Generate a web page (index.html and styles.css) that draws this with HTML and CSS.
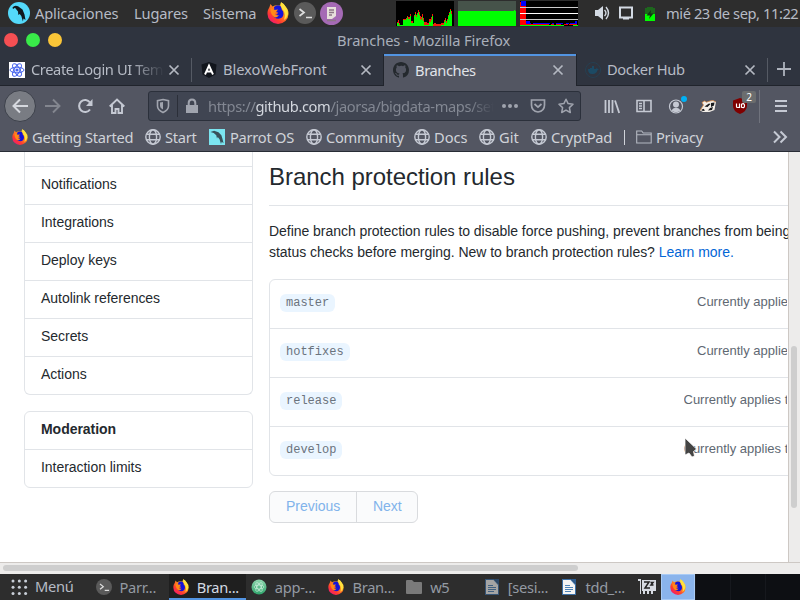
FILE: index.html
```html
<!DOCTYPE html>
<html lang="es">
<head>
<meta charset="utf-8">
<title>Branches</title>
<link rel="stylesheet" href="styles.css">
</head>
<body>
<svg class="defs" aria-hidden="true">
  <defs>
    <linearGradient id="fx-body" x1="1" y1="0" x2="0.2" y2="1"><stop offset="0" stop-color="#fff14a"/><stop offset=".4" stop-color="#ff9a1a"/><stop offset=".75" stop-color="#ff3b30"/><stop offset="1" stop-color="#f0147a"/></linearGradient>
    <linearGradient id="atom-bg" x1="0" y1="0" x2="0" y2="1"><stop offset="0" stop-color="#8fd6ae"/><stop offset="1" stop-color="#2fa56c"/></linearGradient>
    <symbol id="firefox" viewBox="0 0 22 22">
      <path fill="url(#fx-body)" d="M1 8 2.500 5 3.500 2l2 2.500Q9 2.500 13 3.500L14 .3q3 1.500 4.500 4.200Q21.500 7 21.500 12A10.500 10 0 0 1 .5 12Q.3 10 1 8z"/>
      <path fill="#1414d8" d="M7 5q3-2.500 6-1.200 2 1 1.700 3.700 2 1.500 1.800 4.500-.5 4.500-5 4.700Q7 16.500 6 13l4-.5 1-2-3.500-1z"/>
      <path fill="#ff8a16" d="M3.500 5.500 7 8l4-.5-1.500 2L8 12q1.500 2 4 1-2 3.500-5 2-4-3-3.500-9.500z"/>
      <path fill="#ffe23e" d="M14 .3q3 1.500 4.500 4.200 2.500 3 2.500 7.500-1 4-4 6 2-6-.5-9.500Q13 5 14 .3z"/>
    </symbol>
    <symbol id="globe" viewBox="0 0 16 16"><g fill="none" stroke="#c5c9d3" stroke-width="1.4"><circle cx="8" cy="8" r="7.200"/><ellipse cx="8" cy="8" rx="3.600" ry="7.200"/><path d="M1.500 5.300h13M1.500 10.700h13"/></g></symbol>
    <symbol id="close" viewBox="0 0 12 12"><path d="M1.500 1.500l9 9m0-9l-9 9" fill="none" stroke="currentColor" stroke-width="1.700"/></symbol>
    <symbol id="terminal" viewBox="0 0 22 22"><circle cx="11" cy="11" r="11" fill="#5a5a5a"/><path d="M5.500 7l4.500 3.500-4.500 3.500M12 15.500h6" fill="none" stroke="#dedede" stroke-width="1.700"/></symbol>
    <symbol id="doc" viewBox="0 0 14 16"><path d="M0 0h9l5 5v11H0z" fill="#3c6fa5"/><path d="M1 1h7.500l4.500 5v9H1z" fill="#f4f4f4"/><path d="M9 0h5v5z" fill="#2c5c91"/><path d="M3 6.500h5M3 8.500h8M3 10.500h8M3 12.500h6" stroke="#4d83b8"/></symbol>
    <symbol id="folder" viewBox="0 0 16 14"><path d="M0 1q0-1 1-1h5l2 2h7q1 0 1 1v10q0 1-1 1H1q-1 0-1-1z" fill="#7a7a7a"/></symbol>
    <symbol id="parrot" viewBox="0 0 22 22"><path fill="#11181d" d="M4.500 5.500Q6.500 3 10 4.300l4.500 3.200 2 5 1 5.500-2-1.500-.6 3-1.600-5.500-1.600-2-1.400 1-.3-3.500L7 5.800 5 7z"/></symbol>
  </defs>
</svg>

<header class="panel">
  <svg class="panel-parrot" viewBox="0 0 22 22"><circle cx="11" cy="11" r="11" fill="#54d9fa"/><use href="#parrot"/></svg>
  <span class="menu menu-apps">Aplicaciones</span>
  <span class="menu menu-places">Lugares</span>
  <span class="menu menu-system">Sistema</span>
  <svg class="launcher"><use href="#firefox"/></svg>
  <svg class="launcher launcher-terminal"><use href="#terminal"/></svg>
  <svg class="launcher-notes" viewBox="0 0 23 23"><circle cx="11.500" cy="11.500" r="11.500" fill="#a56ab5"/><path d="M7 5h9v9l-4 3H7z" fill="#e7e0dc"/><path d="M9 8h5M9 10.500h5M9 13h3M7 18.500h9" stroke="#8d7787" stroke-width="1.300"/></svg>
  <svg class="graph graph-cpu" viewBox="0 0 58 25" shape-rendering="crispEdges"><path fill="#000" d="M0 0h58v25H0z"/><path fill="#f21b0c" d="M1 25v-4h1v-2h1v3h1v2h3v-6h3v-1h1v-2h1v1h2v-3h1v7h2v2h1v-8h1v-3h1v3h1v-2h1v-3h1v2h1v4h1v1h1v-3h1v4h1v4h3v1h2v-4h2v-2h1v-3h1v10h1v-1h2v1h5v-1h3v-3h1v-2h1v3h1v-2h1v-4h1v-3h1V8h1v2h1v15z"/><path fill="#0f0" d="M1 25v-3h2v2h4v-5h3v-1h1v-2h1v2h2v-3h1v7h3v-7h1v-2h1v3h1v-3h1v-2h1v3h1v4h1v1h1v-3h1v4h1v4h5v-3h2v-2h1v-4h1v10h8v-1h3v-3h1v-2h1v3h1v-3h1v-4h1v-3h1v-3h1v4h1v14z"/></svg>
  <svg class="graph" viewBox="0 0 58 25" shape-rendering="crispEdges"><path fill="#46534a" d="M0 0h58v25H0z"/><path fill="#0f0" d="M0 10h56V9h1v1h1v15H0z"/></svg>
  <svg class="graph" viewBox="0 0 58 25" shape-rendering="crispEdges"><path fill="#000" d="M0 0h58v25H0z"/><path fill="red" d="M0 1h6v24H0z"/><path fill="#00f" d="M1 0h5v5H1zM6 20h4v2H6z"/><path stroke="#ccc" d="M0 6.500h58M0 18.500h58"/><path stroke="#fff" d="M0 12.500h58"/><path stroke="#00f" d="M6 22.500h5m2 0h17m2 0h2m2 0h7m3 0h3m1 0h7"/><path stroke="red" d="M6 23.500h23m2 0h3m2 0h5m3 0h4m1 0h8"/><path stroke="#0f0" d="M0 24.500h44m9 0h5"/><path fill="#00f" d="M55 20h2v2h-2z"/></svg>
  <svg class="tray tray-sound" viewBox="0 0 16 16"><path d="M1 5h3l5-4v14l-5-4H1z" fill="#d3dae3"/><path d="M10.500 5q3 3 0 6M12 2q5 6 0 12" fill="none" stroke="#d3dae3" stroke-width="1.400"/></svg>
  <svg class="tray tray-screen" viewBox="0 0 16 16"><path d="M2 2.500h12v10H2zM5 13.500h6" fill="none" stroke="#d3dae3" stroke-width="2"/></svg>
  <svg class="tray-battery" viewBox="0 0 10 14"><path d="M2 0h6v1h2v13H0V1h2z" fill="#1d661d"/><path d="M0 7h10v7H0z" fill="#0f0"/><path d="M6 3L1.500 8.500H5L4 12l4.500-5.500H5.500z" fill="#153315"/></svg>
  <span class="clock">mié 23 de sep, 11:22</span>
</header>

<div class="titlebar">
  <i class="dot dot-red"></i><i class="dot dot-green"></i><i class="dot dot-yellow"></i>
  <span class="window-title">Branches - Mozilla Firefox</span>
</div>

<nav class="tabs">
  <div class="tab">
    <svg class="favicon" viewBox="0 0 16 16"><path fill="#fff" d="M0 0h16v16H0z"/><g fill="none" stroke="#4663ed"><ellipse cx="8" cy="8" rx="7" ry="2.800"/><ellipse cx="8" cy="8" rx="7" ry="2.800" transform="rotate(60 8 8)"/><ellipse cx="8" cy="8" rx="7" ry="2.800" transform="rotate(120 8 8)"/></g><circle cx="8" cy="8" r="1.600" fill="#4663ed"/></svg>
    <span class="tab-label tab-fade">Create Login UI Tem</span><svg class="tab-close"><use href="#close"/></svg>
  </div>
  <div class="tab tab-divided">
    <svg class="favicon" viewBox="0 0 16 16"><path fill="#11151c" d="M8 0l7.500 2.500-1 10L8 16l-6.500-3.500-1-10z"/><path d="M4 12.500L8 3.500l4 9M5.500 9.500h5" fill="none" stroke="#fff" stroke-width="1.900"/></svg>
    <span class="tab-label tab-blexo">BlexoWebFront</span><svg class="tab-close"><use href="#close"/></svg>
  </div>
  <div class="tab tab-active">
    <svg class="favicon" viewBox="0 0 16 16"><path fill="#24292e" d="M8 0C3.580 0 0 3.580 0 8c0 3.540 2.290 6.530 5.470 7.590.4.070.55-.17.55-.38 0-.19-.01-.82-.01-1.490-2.010.37-2.530-.49-2.690-.94-.09-.23-.48-.94-.82-1.130-.28-.15-.68-.52-.01-.53.63-.01 1.080.58 1.230.82.720 1.210 1.870.87 2.330.66.070-.52.280-.87.510-1.070-1.780-.2-3.640-.89-3.640-3.950 0-.87.310-1.590.82-2.150-.08-.2-.36-1.020.08-2.120 0 0 .67-.21 2.200.82A7.600 7.600 0 0 1 8 3.860c.68 0 1.360.09 2 .27 1.530-1.040 2.200-.82 2.200-.82.440 1.100.160 1.920.080 2.120.510.560.820 1.270.820 2.150 0 3.070-1.870 3.750-3.650 3.950.290.250.540.730.540 1.480 0 1.070-.01 1.930-.01 2.200 0 .210.150.460.550.380A8.010 8.010 0 0 0 16 8c0-4.420-3.580-8-8-8z"/></svg>
    <span class="tab-label">Branches</span><svg class="tab-close"><use href="#close"/></svg>
  </div>
  <div class="tab">
    <svg class="favicon" viewBox="0 0 16 16"><circle cx="8" cy="8" r="7.500" fill="none" stroke="#263f51"/><path d="M3 7h2V6h2V4h2v3h2l1-1.500.5 1.500 1.500.3-1.500 1Q11 12.500 7 12q-4 0-4-5z" fill="#1c4a64"/></svg>
    <span class="tab-label">Docker Hub</span><svg class="tab-close"><use href="#close"/></svg>
  </div>
  <div class="new-tab"><svg viewBox="0 0 14 14"><path d="M7 0v14M0 7h14" stroke="#aeb3bd" stroke-width="1.800"/></svg></div>
</nav>

<div class="toolbar">
  <div class="back"><svg class="icon" viewBox="0 0 16 16"><path d="M16 8H1.500M8 1.500L1.500 8 8 14.500" fill="none" stroke="#d5d8de" stroke-width="2"/></svg></div>
  <div class="tool tool-dim"><svg class="icon" viewBox="0 0 16 16"><path d="M0 8h14.500M8 1.500L14.500 8 8 14.500" fill="none" stroke="currentColor" stroke-width="1.900"/></svg></div>
  <div class="tool"><svg class="icon" viewBox="0 0 16 16"><path d="M13 11.500A6 6 0 1 1 13 4.500" fill="none" stroke="currentColor" stroke-width="2.100"/><path d="M15.500 1v7H9z" fill="currentColor"/></svg></div>
  <div class="tool"><svg class="icon" viewBox="0 0 16 16"><path d="M.7 8.500L8 1.500l7.300 7M3 7v8h3.500v-4h3v4H13V7" fill="none" stroke="currentColor" stroke-width="1.900"/></svg></div>
  <div class="urlbar">
    <svg class="icon" viewBox="0 0 16 16"><path d="M8 1.500l5.500 1.200V8q0 4-5.500 6.500Q2.500 12 2.500 8V2.700z" fill="none" stroke="currentColor" stroke-width="1.600"/><path d="M8 4v7.500Q5 10 5 8V4.600z" fill="currentColor"/></svg>
    <i class="url-divider"></i>
    <svg class="icon lock" viewBox="0 0 16 16"><path d="M2 7h12v8H2z" fill="currentColor"/><path d="M4.700 8V5q0-3.500 3.300-3.500T11.300 5v3" fill="none" stroke="currentColor" stroke-width="2"/></svg>
    <span class="url">https://<b>github.com</b>/jaorsa/bigdata-maps/set</span>
    <svg class="icon" viewBox="0 0 16 16"><g fill="currentColor"><circle cx="2" cy="8" r="2"/><circle cx="8" cy="8" r="2"/><circle cx="14" cy="8" r="2"/></g></svg>
    <svg class="icon" viewBox="0 0 16 16"><path d="M1.500 2h13v5q0 6-6.500 7-6.500-1-6.500-7zM4.500 6L8 9.200 11.500 6" fill="none" stroke="currentColor" stroke-width="1.700"/></svg>
    <svg class="icon" viewBox="0 0 16 16"><path d="M8 1.200l2.100 4.400 4.900.6-3.600 3.400.9 4.900L8 12.100l-4.300 2.400.9-4.900L1 6.200l4.900-.6z" fill="none" stroke="currentColor" stroke-width="1.500" stroke-linejoin="round"/></svg>
  </div>
  <div class="tool"><svg class="icon" viewBox="0 0 16 16"><path d="M1.500 2v13M5 2v13M8.500 2v13M11 2.500L15.200 15" stroke="currentColor" stroke-width="1.800"/></svg></div>
  <div class="tool"><svg class="icon" viewBox="0 0 16 16"><path d="M1 2.500h14v11H1zM8 2.500v11M3 5.500h3M3 8h3M3 10.500h3" fill="none" stroke="currentColor" stroke-width="1.600"/></svg></div>
  <div class="tool account"><svg class="icon" viewBox="0 0 16 16"><circle cx="8" cy="8.500" r="6.500" fill="none" stroke="currentColor" stroke-width="1.200"/><circle cx="8" cy="6.500" r="3" fill="currentColor"/><path d="M3.500 12.500Q5 9.500 8 9.800q3-.3 4.500 2.700Q8 16 3.500 12.500z" fill="currentColor"/></svg><i class="notice"></i></div>
  <div class="tool"><svg class="icon" viewBox="0 0 16 16"><path d="M0 12.500L3.500 7 2 4.500 4.500 3l2 1.200L10 3l3-.5L16 4l-.8 4-.7 4-5 2H3z" fill="#f3eee8"/><path d="M4.500 8.500L9 5.500l1.500.5-3 3zM11 5l3.500-.5-.5 3-3 1.500zM1 12l2.500-1.200L5 12.500l-2 .5zM8 12.500l2-2.500 3-1-1 3z" fill="#17191c"/><path d="M0 12.500L3.500 7 2 4.500 4.500 3l2 1.200L10 3l3-.5L16 4" fill="none" stroke="#d68a49" stroke-width=".8"/></svg></div>
  <div class="tool ublock"><svg class="icon" viewBox="0 0 16 16"><path d="M8 0l7 2.500V8q0 5-7 8-7-3-7-8V2.500z" fill="#800000"/><path d="M4.500 5.500v3q0 1 1 1h1q1 0 1-1v-3M7.500 5.500v4.500M9.500 6.200q3-1.500 3 1.600 0 2.800-3 1.500z" fill="none" stroke="#fff" stroke-width="1.200"/></svg><span class="count">2</span></div>
  <i class="toolbar-divider"></i>
  <div class="tool"><svg class="icon" viewBox="0 0 16 16"><path d="M2 3h12M2 8h12M2 13h12" stroke="currentColor" stroke-width="2"/></svg></div>
</div>

<div class="bookmarks">
  <span class="bm bm-started"><svg class="icon"><use href="#firefox"/></svg>Getting Started</span>
  <span class="bm bm-start"><svg class="icon"><use href="#globe"/></svg>Start</span>
  <span class="bm bm-parrot"><svg class="icon" viewBox="0 0 22 22"><path fill="#7be4ef" d="M0 0h22v22H0z"/><path fill="#38515a" d="M2 4l5-1.500 6 2 4 4 1.500 5 1.500 6-2.500-2-1 3-2-6.500-2.500-3-1 2-1-4.500-3.500-3z"/></svg>Parrot OS</span>
  <span class="bm bm-community"><svg class="icon"><use href="#globe"/></svg>Community</span>
  <span class="bm bm-docs"><svg class="icon"><use href="#globe"/></svg>Docs</span>
  <span class="bm bm-git"><svg class="icon"><use href="#globe"/></svg>Git</span>
  <span class="bm bm-crypt"><svg class="icon"><use href="#globe"/></svg>CryptPad</span>
  <i class="bm-divider"></i>
  <span class="bm bm-privacy"><svg class="icon" viewBox="0 0 16 16"><path d="M.7 14V2h5l1.500 2h8v10zM.7 5.800h14.600" fill="none" stroke="#b4b8c1" stroke-width="1.100"/></svg>Privacy</span>
  <svg class="icon more" viewBox="0 0 16 16"><path d="M2 2.500L7.500 8 2 13.500M8.500 2.500L14 8l-5.500 5.500" fill="none" stroke="#c5c9d3" stroke-width="2"/></svg>
</div>

<div class="viewport">
  <div class="page">
    <aside class="side">
      <ul class="side-menu side-menu-cut">
        <li class="side-cut"></li>
        <li>Notifications</li><li>Integrations</li><li>Deploy keys</li><li>Autolink references</li><li>Secrets</li><li>Actions</li>
      </ul>
      <ul class="side-menu">
        <li class="side-heading">Moderation</li><li>Interaction limits</li>
      </ul>
    </aside>
    <main class="main">
      <h2>Branch protection rules</h2>
      <p>Define branch protection rules to disable force pushing, prevent branches from being<br>status checks before merging. New to branch protection rules? <a>Learn more.</a></p>
      <div class="rules">
        <div class="rule"><code>master</code><span class="applies">Currently applies</span></div>
        <div class="rule"><code>hotfixes</code><span class="applies">Currently applies</span></div>
        <div class="rule"><code>release</code><span class="applies applies-wide">Currently applies t</span></div>
        <div class="rule"><code>develop</code><span class="applies applies-wide">Currently applies t</span></div>
      </div>
      <div class="pager"><span class="prev">Previous</span><span class="next">Next</span></div>
    </main>
  </div>
  <div class="vscroll"><i class="vthumb"></i></div>
  <svg class="pointer" viewBox="0 0 14 22"><path d="M1 1v17l4-2 3 4 2.500-1-1-4.500L12.500 12z" fill="#444" stroke="#fff" stroke-opacity=".75"/></svg>
</div>
<div class="hscroll"><i class="hthumb"></i></div>

<footer class="taskbar">
  <svg class="grid-icon" viewBox="0 0 17 17"><g fill="#c9cfd8"><circle cx="2" cy="2" r="1.500"/><circle cx="8.300" cy="2" r="1.500"/><circle cx="14.600" cy="2" r="1.500"/><circle cx="2" cy="8.300" r="1.500"/><circle cx="8.300" cy="8.300" r="1.500"/><circle cx="14.600" cy="8.300" r="1.500"/><circle cx="2" cy="14.600" r="1.500"/><circle cx="8.300" cy="14.600" r="1.500"/><circle cx="14.600" cy="14.600" r="1.500"/></g></svg>
  <span class="start-label">Menú</span>
  <div class="task"><svg class="icon"><use href="#terminal"/></svg>Parr...</div>
  <div class="task task-active"><svg class="icon"><use href="#firefox"/></svg>Bran...</div>
  <div class="task"><svg class="icon" viewBox="0 0 16 16"><circle cx="8" cy="8" r="7.500" fill="url(#atom-bg)"/><g fill="none" stroke="#d7f2e2" stroke-width=".6"><ellipse cx="8" cy="8" rx="5" ry="2"/><ellipse cx="8" cy="8" rx="5" ry="2" transform="rotate(60 8 8)"/><ellipse cx="8" cy="8" rx="5" ry="2" transform="rotate(120 8 8)"/></g></svg>app-...</div>
  <div class="task"><svg class="icon"><use href="#firefox"/></svg>Bran...</div>
  <div class="task"><svg class="icon"><use href="#folder"/></svg>w5</div>
  <div class="task task-dim"><svg class="icon"><use href="#doc"/></svg>[sesi...</div>
  <div class="task"><svg class="icon"><use href="#doc"/></svg>tdd_...</div>
  <svg class="chip" viewBox="0 0 18 16"><path d="M0 0h3v15H2V2H0zM4 1h14v11H4zM5 12h2v3H5zM9 12h2v3H9zM13 12h2v3h-2z" fill="#d7dbe2"/><path d="M6 3h5l-4 6h5M12.500 3.500H15L13 6h2.500" fill="none" stroke="#222" stroke-width="1.500"/></svg>
  <div class="space space-on"><svg class="icon"><use href="#firefox"/></svg></div>
  <div class="space"></div><div class="space"></div><div class="space"></div>
</footer>
</body>
</html>
```
FILE: styles.css
```css
* { box-sizing: border-box; }
body {
  margin: 0; width: 800px; height: 600px; overflow: hidden;
  display: flex; flex-direction: column; background: #2f343f;
  font: 14.670px/20px "Noto Sans", sans-serif; color: #b6bbc5; white-space: nowrap;
}
svg, i { display: block; flex: none; }
.defs { position: absolute; width: 0; height: 0; }
.icon { width: 16px; height: 16px; }

.panel { flex: none; height: 27px; background: #2d2d2d; display: flex; align-items: center; padding-left: 8px; }
.panel-parrot { width: 22px; height: 22px; margin: -2px 5px 0 0; }
.menu, .clock { flex: none; margin-top: -1px; letter-spacing: -.15px; }
.menu-apps { width: 99px; }
.menu-places { width: 69px; }
.menu-system { width: 64px; }
.launcher { width: 22px; height: 22px; margin-top: -1px; }
.launcher-terminal { margin-left: 5px; }
.launcher-notes { width: 23px; height: 23px; margin: -1px 53px 0 4px; }
.graph { width: 58px; height: 25px; margin-right: 4px; }
.tray { width: 16px; height: 16px; margin-top: -1px; }
.tray-sound { margin-left: 12px; }
.tray-screen { margin-left: 8px; }
.tray-battery { width: 10px; height: 14px; margin: 0 12px 0 11px; }
.clock { margin-left: -1px; letter-spacing: -.42px; }

.titlebar { flex: none; height: 27px; display: flex; align-items: center; gap: 8px; padding-left: 4px; }
.dot { width: 14px; height: 14px; border-radius: 50%; margin-top: -1px; }
.dot-red { background: #f54f53; }
.dot-green { background: #39ea49; }
.dot-yellow { background: #fbc638; }
.window-title { margin: -2px 0 0 267px; color: #a9afba; letter-spacing: -.08px; }

.tabs { flex: none; height: 32px; display: flex; border-bottom: 1px solid #20242c; letter-spacing: -.4px; }
.tab { flex: none; width: 192px; display: flex; align-items: center; padding-left: 9px; }
.tab-divided, .new-tab { background: linear-gradient(#555a64, #555a64) no-repeat 0 4px / 1px 24px; }
.tab-divided { margin-left: -1px; width: 193px; padding-left: 10px; }
.tab-active { background: #535662; border-top: 2px solid #5294e2; color: #e0e3e8; margin-bottom: -1px; box-shadow: -1px 0 #20242c, 1px 0 #20242c; padding-bottom: 2px; }
.favicon { width: 16px; height: 16px; margin-right: 6px; }
.tab-label { width: 137px; margin-top: -1px; overflow: hidden; }
.tab-blexo { letter-spacing: -.08px; }
.tab-fade { width: 133px; margin-right: 4px; -webkit-mask: linear-gradient(90deg, #000 75%, transparent); mask: linear-gradient(90deg, #000 75%, transparent); }
.tab-close { width: 12px; height: 12px; color: #b4b8c1; }
.new-tab { width: 33px; margin-left: -1px; padding: 8px 0 0 10px; }
.new-tab svg { width: 14px; height: 14px; }

.toolbar { flex: none; height: 39px; background: #535662; display: flex; align-items: center; padding: 1px 0 0 4px; color: #c5c9d3; }
.back { flex: none; width: 32px; height: 32px; border-radius: 50%; background: #797c83; border: 1px solid #3d414b; display: grid; place-items: center; margin-right: 1px; }
.tool { flex: none; width: 32px; height: 32px; display: grid; place-items: center; position: relative; }
.tool-dim { color: #83868f; }
.urlbar { flex: none; width: 433px; height: 30px; margin: 0 15px; background: #404552; border: 1px solid #2b303b; border-radius: 3px; display: flex; align-items: center; gap: 12px; padding-left: 6px; color: #a0a4ae; }
.url-divider { width: 1px; height: 22px; background: #2b2f39; margin: 0 -6px; }
.lock { margin: 0 -4px 0 0; }
.url { flex: none; width: 286px; overflow: hidden; color: #828792; margin-right: -4px; letter-spacing: -.38px; -webkit-mask: linear-gradient(90deg, #000 91%, transparent); mask: linear-gradient(90deg, #000 91%, transparent); }
.url b { font-weight: 400; color: #d3d7de; }
.notice { position: absolute; right: 5px; top: 6px; width: 6px; height: 6px; border-radius: 50%; background: #00b0f4; }
.count { position: absolute; left: 18px; top: 1px; width: 14px; height: 12px; background: #6b6d6e; border-radius: 2px; color: #fff; font-size: 10px; line-height: 12px; text-align: center; }
.toolbar-divider { width: 1px; height: 33px; background: #70737d; margin: 0 5px 0 3px; }

.bookmarks { flex: none; height: 27px; background: #535662; border-bottom: 1px solid #282c35; display: flex; align-items: center; padding: 0 0 2px 12px; color: #d0d3d9; letter-spacing: -.27px; }
.bm { flex: none; display: flex; align-items: center; gap: 4px; }
.bm-started { width: 133px; }
.bm-start { width: 64px; }
.bm-parrot { width: 97px; gap: 5px; }
.bm-community { width: 108px; }
.bm-docs { width: 65px; letter-spacing: 0; }
.bm-git { width: 52px; letter-spacing: 0; }
.bm-crypt { width: 93px; }
.bm-divider { width: 1px; height: 15px; background: #d0d3d9; margin-right: 11px; }
.bm-privacy { width: 136px; }

.viewport { flex: none; height: 410px; display: flex; position: relative; font-family: "Liberation Sans", sans-serif; }
.page { flex: none; width: 788px; overflow: hidden; background: #fff; display: flex; gap: 16px; padding-left: 24px; color: #24292e; font-size: 14px; line-height: 21px; letter-spacing: -.04px; }
.side { flex: none; width: 229px; }
.side-menu { list-style: none; margin: 0 0 16px; padding: 0; border: 1px solid #e1e4e8; border-radius: 6px; }
.side-menu-cut { border-top: 0; border-radius: 0 0 6px 6px; }
.side-menu li { height: 38px; padding: 7px 16px; border-top: 1px solid #e1e4e8; }
.side-menu li:first-child { border-top: 0; height: 37px; }
.side-menu .side-cut:first-child { height: 14px; padding: 0; }
.side-heading { font-weight: 700; }
.main { flex: none; width: 519px; }
h2 { margin: 0; height: 54px; padding-top: 7px; font-size: 24px; line-height: 36px; font-weight: 400; border-bottom: 1px solid #e1e4e8; }
p { margin: 15px 0 16px; line-height: 21px; }
a { color: #0366d6; }
.rules { width: 540px; border: 1px solid #e1e4e8; border-radius: 6px; }
.rule { height: 49px; display: flex; align-items: center; padding-left: 10px; border-top: 1px solid #e1e4e8; }
.rule:first-child { border-top: 0; height: 48px; }
code { flex: none; height: 18px; margin-top: -3px; padding: 0 6px; border-radius: 6px; background: #eaf5ff; color: #6a737d; font: 12px/18px "Liberation Mono", monospace; letter-spacing: 0; }
.applies { flex: none; width: 90px; margin: -6px 21px 0 auto; overflow: hidden; font-size: 13px; color: #606872; letter-spacing: 0; }
.applies-wide { width: 103.500px; }
.pager { width: 149px; height: 32px; margin-top: 15px; display: flex; border: 1px solid #d9dbde; border-radius: 6px; background: #fafbfc; color: #81b3eb; line-height: 29px; }
.prev { width: 87px; padding-left: 16px; border-right: 1px solid #d9dbde; }
.next { padding-left: 16px; }
.vscroll { width: 12px; background: #edeceb; border-left: 1px solid #cdc8c4; padding: 194px 0 0 2px; }
.vthumb { width: 6px; height: 162px; border-radius: 3px; background: #cecece; }
.pointer { position: absolute; left: 684px; top: 285px; width: 14px; height: 22px; }
.hscroll { flex: none; height: 12px; background: #edeceb; border-top: 1px solid #cdc8c4; padding: 2px 0 0 3px; }
.hthumb { width: 575px; height: 6px; border-radius: 3px; background: #cecece; }

.taskbar { flex: none; height: 26px; background: #2d2d2d; display: flex; align-items: center; padding-left: 11px; color: #949aa3; letter-spacing: -.3px; }
.grid-icon { width: 17px; height: 17px; margin-right: 7px; }
.start-label { flex: none; width: 56px; margin-top: -2px; color: #b6bbc5; }
.task { flex: none; width: 77.670px; height: 26px; display: flex; align-items: center; gap: 8px; padding: 0 0 1px 4.500px; }
.task-active { background: #1f1f1f; border-bottom: 2px solid #5294e2; color: #d3dae3; padding: 1px 0 0 4px; }
.task-dim .icon { opacity: .6; }
.chip { width: 18px; height: 16px; margin: 0 5px 0 3px; }
.space { flex: none; width: 35px; height: 26px; background: #0d0f13; border-left: 1px solid #16181d; }
.space-on { width: 34px; background: #8ab4ec; border: 1px solid #a9cbf5; display: grid; place-items: center; }
```
